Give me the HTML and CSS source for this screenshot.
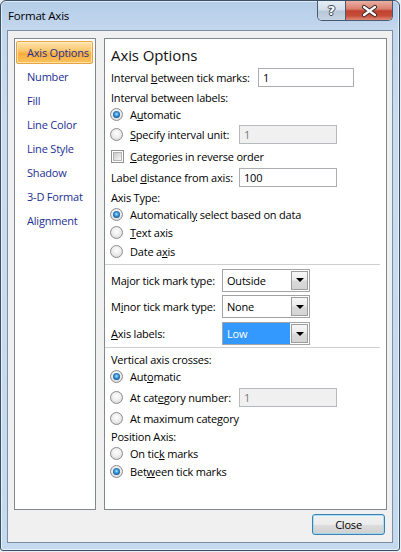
FILE: index.html
```html
<!DOCTYPE html>
<html>
<head>
<meta charset="utf-8">
<title>Format Axis</title>
<link rel="stylesheet" href="styles.css">
</head>
<body>
<div class="window">
  <div class="titlebar">
    <span class="title">Format Axis</span>
    <div class="caption">
      <span class="cbtn help">?</span>
      <span class="cbtn close">
        <svg width="46" height="19" viewBox="0 0 46 19">
          <path d="M18 6 L29 14 M29 6 L18 14" stroke="#3a2a2a" stroke-width="4.2" stroke-linecap="round" fill="none"/>
          <path d="M18 6 L29 14 M29 6 L18 14" stroke="#ffffff" stroke-width="2.2" stroke-linecap="round" fill="none"/>
        </svg>
      </span>
    </div>
  </div>
  <div class="client">
    <div class="panels">
      <ul class="nav">
        <li class="sel">Axis Options</li>
        <li>Number</li>
        <li>Fill</li>
        <li>Line Color</li>
        <li>Line Style</li>
        <li>Shadow</li>
        <li>3-D Format</li>
        <li>Alignment</li>
      </ul>
      <div class="main">
        <div class="heading">Axis Options</div>
        <div class="row h21"><span class="w147">Interval <u>b</u>etween tick marks:</span><span class="input w96">1</span></div>
        <div class="row h18"><span>Interval between labels:</span></div>
        <div class="row h17"><span class="radio on"></span><span>A<u>u</u>tomatic</span></div>
        <div class="row h23"><span class="radio"></span><span class="w109"><u>S</u>pecify interval unit:</span><span class="input dis w98">1</span></div>
        <div class="row h21"><span class="check"></span><span><u>C</u>ategories in reverse order</span></div>
        <div class="row h21"><span class="w128">Label <u>d</u>istance from axis:</span><span class="input w98">100</span></div>
        <div class="row h18"><span>Axis Type:</span></div>
        <div class="row h17"><span class="radio on"></span><span>Automaticall<u>y</u> select based on data</span></div>
        <div class="row h19"><span class="radio"></span><span><u>T</u>ext axis</span></div>
        <div class="row h19"><span class="radio"></span><span>Date a<u>x</u>is</span></div>
        <div class="sep sep1"></div>
        <div class="row h26"><span class="w111">Ma<u>j</u>or tick mark type:</span><span class="select"><span class="val">Outside</span><span class="arrow"><span class="tri"></span></span></span></div>
        <div class="row h27"><span class="w111">M<u>i</u>nor tick mark type:</span><span class="select"><span class="val">None</span><span class="arrow"><span class="tri"></span></span></span></div>
        <div class="row h27"><span class="w111"><u>A</u>xis labels:</span><span class="select"><span class="val hl">Low</span><span class="arrow"><span class="tri"></span></span></span></div>
        <div class="sep sep2"></div>
        <div class="row h17"><span>Vertical axis crosses:</span></div>
        <div class="row h17"><span class="radio on"></span><span>Aut<u>o</u>matic</span></div>
        <div class="row h24"><span class="radio"></span><span class="w109">At cat<u>e</u>gory number:</span><span class="input dis w98">1</span></div>
        <div class="row h18"><span class="radio"></span><span>At maximum cate<u>g</u>ory</span></div>
        <div class="row h18"><span>Position Axis:</span></div>
        <div class="row h17"><span class="radio"></span><span>On tic<u>k</u> marks</span></div>
        <div class="row h19"><span class="radio on"></span><span>Bet<u>w</u>een tick marks</span></div>
      </div>
    </div>
    <div class="footer">
      <button class="btn">Close</button>
    </div>
  </div>
</div>
</body>
</html>
```
FILE: styles.css
```css
* { box-sizing: border-box; }
html, body { margin: 0; padding: 0; }
body {
  width: 401px;
  height: 552px;
  overflow: hidden;
  background: #e9eef4;
  font-family: "Open Sans", "Noto Sans", sans-serif;
  font-size: 11px;
  letter-spacing: -0.2px;
  color: #000;
}
.window {
  width: 400px;
  height: 551px;
  border: 1px solid #3a4f68;
  border-radius: 6px 6px 3px 3px;
  background: linear-gradient(180deg, #b4cde8 0, #c3d7ed 28px, #c9dcf0 120px, #c6daef 100%);
  box-shadow: inset 0 0 0 1px rgba(255, 255, 255, 0.6);
  padding: 0 6px 7px 6px;
  display: flex;
  flex-direction: column;
}
.titlebar {
  height: 29px;
  display: flex;
  justify-content: space-between;
  align-items: flex-start;
  flex: none;
}
.title {
  padding-left: 1px;
  line-height: 29px;
  font-size: 11.5px;
  color: #000;
}
.caption {
  display: flex;
  height: 20px;
  border: 1px solid #475a72;
  border-top: none;
  border-radius: 0 0 5px 5px;
  overflow: hidden;
}
.cbtn {
  height: 19px;
  display: flex;
  align-items: center;
  justify-content: center;
}
.help {
  width: 28px;
  border-right: 1px solid #475a72;
  background: linear-gradient(180deg, #e6edf5 0, #d3dde9 48%, #b7c6d8 52%, #c7d4e3 100%);
  color: #fff;
  font-family: "DejaVu Sans", sans-serif;
  font-weight: bold;
  font-size: 13px;
  line-height: 19px;
  letter-spacing: 0;
  text-shadow: 1px 0 0 #3c4654, -1px 0 0 #3c4654, 0 1px 0 #3c4654, 0 -1px 0 #3c4654;
}
.close {
  width: 46px;
  background: linear-gradient(180deg, #eab0a3 0, #d98070 42%, #c0422f 52%, #c84e3a 78%, #de8c78 100%);
}
.client {
  height: 513px;
  border: 1px solid #7b8ea6;
  background: #f0f0f0;
  padding: 7px 5px 7px 6px;
  display: flex;
  flex-direction: column;
}
.panels {
  height: 472px;
  display: flex;
  gap: 8px;
}
.nav {
  width: 82px;
  margin: 0;
  padding: 2px 2px 2px 1px;
  list-style: none;
  background: #fff;
  border: 1px solid #828790;
}
.nav li {
  height: 23px;
  margin-bottom: 1px;
  border: 1px solid transparent;
  border-radius: 2px;
  padding-left: 10px;
  line-height: 21px;
  color: #1c2f93;
  white-space: nowrap;
}
.nav li.sel {
  border-color: #e9a441;
  background: linear-gradient(180deg, #fde3ae 0, #fcc86f 40%, #f9ad3e 55%, #fbc25e 100%);
  box-shadow: inset 0 0 0 1px rgba(255, 240, 200, 0.7);
}
.main {
  flex: 1;
  background: #fff;
  border: 1px solid #828790;
  padding: 5px 0 0 6px;
}
.heading {
  height: 23px;
  font-size: 15px;
  line-height: 23px;
  letter-spacing: -0.1px;
  color: #111;
}
.row {
  display: flex;
  align-items: center;
  white-space: nowrap;
}
.h17 { height: 17px; }
.h18 { height: 18px; }
.h19 { height: 19px; }
.h21 { height: 21px; }
.h23 { height: 23px; }
.h24 { height: 24px; }
.h26 { height: 26px; }
.h27 { height: 27px; }
.w147 { width: 147px; flex: none; }
.w128 { width: 128px; flex: none; }
.w111 { width: 111px; flex: none; }
.w109 { width: 109px; flex: none; }
.input {
  height: 19px;
  border: 1px solid #abadb3;
  background: #fff;
  padding-left: 4px;
  line-height: 17px;
  flex: none;
}
.input.w96 { width: 96px; }
.input.w98 { width: 98px; }
.input.dis {
  background: #f0f0f0;
  border-color: #b6babf;
  color: #7a7a7a;
}
.radio {
  width: 13px;
  height: 13px;
  flex: none;
  margin-left: -1px;
  margin-right: 7px;
  border-radius: 50%;
  border: 1px solid #8a8c8e;
  background: radial-gradient(circle at 50% 40%, #ffffff 0, #eeeeee 45%, #cfcfcf 100%);
  position: relative;
}
.radio.on::after {
  content: "";
  position: absolute;
  left: 2px;
  top: 2px;
  width: 7px;
  height: 7px;
  border-radius: 50%;
  background: radial-gradient(circle at 50% 45%, #b8e6ff 0, #49a3e4 30%, #135a9c 70%, #0b3a6c 100%);
}
.check {
  width: 13px;
  height: 13px;
  flex: none;
  margin-right: 6px;
  border: 1px solid #8e8f8f;
  background: #fff;
  position: relative;
}
.check::after {
  content: "";
  position: absolute;
  left: 1px;
  top: 1px;
  width: 9px;
  height: 9px;
  background: linear-gradient(135deg, #c9c9c9 0, #e2e2e2 55%, #f7f7f7 100%);
  border: 1px solid #b3b3b3;
  box-sizing: border-box;
}
.sep { height: 1px; background: #cfcfcf; margin-left: -6px; margin-right: 6px; }
.sep1 { margin-top: 3px; margin-bottom: 2px; }
.sep2 { margin-top: 0; margin-bottom: 3px; }
.select {
  width: 88px;
  height: 23px;
  flex: none;
  display: flex;
  border: 1px solid #a3a3a3;
  background: #fff;
}
.select .val {
  flex: 1;
  padding-left: 4px;
  line-height: 21px;
}
.select .val.hl {
  background: #3399ff;
  color: #fff;
}
.select .arrow {
  width: 17px;
  margin: 1px;
  border: 1px solid #9c9c9c;
  background: linear-gradient(180deg, #f7f7f7 0, #ebebeb 48%, #dadada 52%, #d4d4d4 100%);
  display: flex;
  align-items: center;
  justify-content: center;
}
.tri {
  width: 0;
  height: 0;
  border-left: 4px solid transparent;
  border-right: 4px solid transparent;
  border-top: 4px solid #000;
}
.footer {
  margin-top: 4px;
  display: flex;
  justify-content: flex-end;
}
.btn {
  width: 73px;
  height: 21px;
  margin-right: 2px;
  padding: 0;
  border: 1px solid #3c7fb1;
  border-radius: 3px;
  background: linear-gradient(180deg, #f2f2f2 0, #ebebeb 50%, #dddddd 51%, #cfcfcf 100%);
  box-shadow: inset 0 0 0 1px rgba(140, 220, 250, 0.7);
  font-family: "Open Sans", "Noto Sans", sans-serif;
  font-size: 11px;
  letter-spacing: -0.2px;
  color: #000;
}
```
